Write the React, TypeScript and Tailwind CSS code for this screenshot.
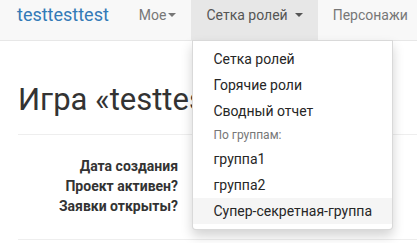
import React from "react";

const Caret = () => (
  <span className="ml-[3px] inline-block h-0 w-0 border-x-[4px] border-t-[4px] border-x-transparent border-t-current align-middle" />
);

export default function App() {
  const menu = [
    { label: "Сетка ролей" },
    { label: "Горячие роли" },
    { label: "Сводный отчет" },
    { label: "По группам:", header: true },
    { label: "группа1" },
    { label: "группа2" },
    { label: "Супер-секретная-группа", active: true },
  ];

  const fields = ["Дата создания", "Проект активен?", "Заявки открыты?"];

  return (
    <div className="h-[243px] w-[417px] overflow-hidden bg-white font-['Roboto',sans-serif] text-[14px] text-[#333]">
      {/* Navbar */}
      <nav className="relative z-10 flex h-[41px] border-b border-[#e7e7e7] bg-[#f8f8f8] pl-[2px]">
        <a className="whitespace-nowrap px-[15px] pt-[3px] text-[18px] leading-[24px] text-[#337ab7]">
          testtesttest
        </a>
        <ul className="flex">
          <li className="h-[40px] whitespace-nowrap px-[15px] pt-[5px] leading-[20px] text-[#777]">
            <span className="flex items-center">
              Мое
              <span className="ml-[-1px] flex">
                <Caret />
              </span>
            </span>
          </li>
          <li className="relative h-[40px] whitespace-nowrap bg-[#e7e7e7] px-[15px] pt-[5px] leading-[20px] text-[#555]">
            <span className="flex items-center">
              Сетка ролей
              <span className="ml-[4px] flex">
                <Caret />
              </span>
            </span>
            {/* Dropdown */}
            <ul className="absolute left-[1px] top-[40px] whitespace-nowrap rounded-b-[4px] border border-black/15 bg-white py-[5px] shadow-[0_6px_12px_rgba(0,0,0,0.175)]">
              {menu.map((m) =>
                m.header ? (
                  <li key={m.label} className="px-[20px] py-[3px] text-[12px] leading-[16px] text-[#777]">
                    {m.label}
                  </li>
                ) : (
                  <li
                    key={m.label}
                    className={`px-[20px] py-[3px] leading-[20px] text-[#262626] ${m.active ? "bg-[#f5f5f5]" : ""}`}
                  >
                    {m.label}
                  </li>
                )
              )}
            </ul>
          </li>
          <li className="whitespace-nowrap px-[15px] pt-[5px] leading-[20px] text-[#777]">
            Персонажи
          </li>
        </ul>
      </nav>

      {/* Page */}
      <div className="ml-[18px]">
        <h1 className="mt-[41px] whitespace-nowrap border-b border-[#eee] pb-[17px] text-[31px] leading-[35px] font-normal text-[#333]">
          Игра «testtesttest»
        </h1>
        <dl className="mt-[21px] border-b border-[#eee] pb-[23px]">
          {fields.map((f) => (
            <div key={f} className="flex">
              <dt className="w-[160px] text-right font-bold leading-[20px]">{f}</dt>
              <dd />
            </div>
          ))}
        </dl>
      </div>
    </div>
  );
}
